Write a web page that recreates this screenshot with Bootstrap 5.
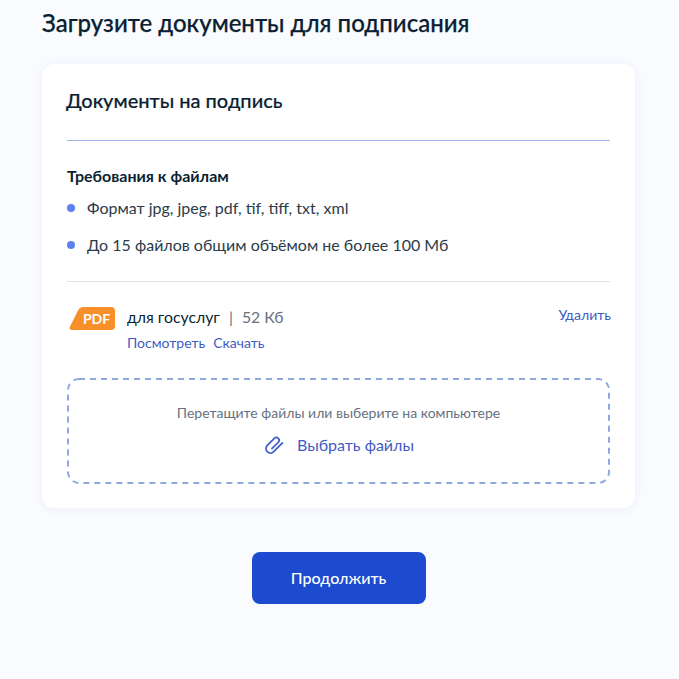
<!DOCTYPE html>
<html lang="ru">
<head>
  <meta charset="UTF-8">
  <meta name="viewport" content="width=device-width, initial-scale=1">
  <title>Загрузите документы</title>
  <link href="https://cdn.jsdelivr.net/npm/bootstrap@5.3.2/dist/css/bootstrap.min.css" rel="stylesheet">
  <style>
    body {
      background: #fafbff;
      font-family: Lato, "Noto Sans", sans-serif;
      color: #0b1f33;
      overflow: hidden;
    }
    .page-wrap {
      padding: 8px 44px 0 42px;
    }
    .page-title {
      font-size: 24px;
      line-height: 30px;
      font-weight: 500;
      margin: 0 0 26px;
      -webkit-text-stroke: 0.25px #0b1f33;
    }
    .doc-card {
      background: #fff;
      border-radius: 12px;
      box-shadow: 0 1px 10px rgba(105, 130, 190, .1);
      padding: 22px 25px 24px;
      height: 444px;
    }
    .doc-title {
      font-size: 20px;
      line-height: 28px;
      font-weight: 500;
      margin: 0;
      padding-bottom: 26px;
      border-bottom: 1px solid #9db4e8;
      text-indent: -1px;
      -webkit-text-stroke: 0.2px #0b1f33;
    }
    .req-title {
      font-size: 16px;
      line-height: 20px;
      font-weight: 700;
      margin: 25px 0 0;
    }
    .req-list {
      list-style: none;
      margin: 0;
      padding: 0 0 24px;
      border-bottom: 1px solid #e1e1e1;
      font-size: 16px;
      line-height: 24px;
      color: #2c3b4a;
    }
    .req-list li {
      display: flex;
      align-items: center;
      gap: 12px;
      margin-top: 13px;
    }
    .req-list li:first-child { margin-top: 10px; }
    .req-dot {
      width: 8px;
      height: 8px;
      border-radius: 50%;
      background: #5a82ee;
      flex-shrink: 0;
    }
    .file-row { margin: 25px -1px 0 0; }
    .pdf-icon {
      width: 47px;
      height: 23px;
      flex-shrink: 0;
      margin: 0 11px 0 2px;
    }
    .file-name { font-size: 15.8px; line-height: 20px; }
    .file-size { color: #66727f; }
    .file-sep { color: #66727f; margin: 0 5px; }
    .doc-link {
      color: #3f5bc4;
      font-size: 14px;
      line-height: 20px;
      text-decoration: none;
    }
    .file-links { margin-top: 6px; }
    .delete-link { margin-top: -2px; }
    .drop-zone {
      margin-top: 25px;
      height: 106px;
      padding-bottom: 3px;
      position: relative;
    }
    .drop-frame {
      position: absolute;
      inset: 0;
      width: 100%;
      height: 100%;
    }
    .drop-hint { font-size: 14px; line-height: 20px; color: #66727f; }
    .pick-files { font-size: 16px; line-height: 24px; color: #3f5bc4; margin-top: 10px; gap: 12px; }
    .btn-next {
      background: #1d4bd0;
      border: 0;
      color: #fff;
      font-size: 16px;
      width: 174px;
      height: 52px;
      border-radius: 8px;
      font-weight: 500;
    }
    .next-row { margin-top: 44px; }
  </style>
</head>
<body>

<div class="page-wrap">
  <h1 class="page-title">Загрузите документы для подписания</h1>

  <div class="doc-card">
    <h2 class="doc-title">Документы на подпись</h2>

    <p class="req-title">Требования к файлам</p>
    <ul class="req-list">
      <li><span class="req-dot"></span>Формат jpg, jpeg, pdf, tif, tiff, txt, xml</li>
      <li><span class="req-dot"></span>До 15 файлов общим объёмом не более 100 Мб</li>
    </ul>

    <!-- файл -->
    <div class="file-row d-flex align-items-start">
      <svg class="pdf-icon" viewBox="0 0 47 23" aria-hidden="true">
        <path d="M14 0H42a4 4 0 0 1 4 4V19a4 4 0 0 1-4 4H3C0.800 23 0 21.500 1 19.500L9 3.500C10 1.200 11.800 0 14 0Z" fill="#f7902a"/>
        <text x="27.500" y="17" text-anchor="middle" fill="#fff" font-family="Lato, sans-serif" font-size="14" font-weight="700">PDF</text>
      </svg>
      <div class="flex-grow-1">
        <div class="file-name">для госуслуг<span class="file-sep"> | </span><span class="file-size">52 Кб</span></div>
        <div class="file-links d-flex gap-2">
          <a class="doc-link" href="#">Посмотреть</a>
          <a class="doc-link" href="#">Скачать</a>
        </div>
      </div>
      <a class="doc-link delete-link" href="#">Удалить</a>
    </div>

    <div class="drop-zone d-flex flex-column align-items-center justify-content-center">
      <svg class="drop-frame" aria-hidden="true">
        <rect x="1" y="1" width="541" height="104" rx="11" fill="none" stroke="#90a8e0" stroke-width="2" stroke-dasharray="6 5"/>
      </svg>
      <div class="drop-hint">Перетащите файлы или выберите на компьютере</div>
      <div class="pick-files d-flex align-items-center">
        <svg width="22" height="22" viewBox="0 0 22 22" fill="none" stroke="#3f5bc4" stroke-width="1.700" stroke-linecap="round" aria-hidden="true">
          <g transform="rotate(45 11 11)">
            <path d="M15.500 3.500V16a4.500 4.500 0 0 1-9 0V6a2.800 2.800 0 0 1 5.600 0V15"/>
          </g>
        </svg>
        <span>Выбрать файлы</span>
      </div>
    </div>
  </div>

  <div class="next-row text-center">
    <button class="btn btn-next" type="button">Продолжить</button>
  </div>
</div>

<script src="https://cdn.jsdelivr.net/npm/bootstrap@5.3.2/dist/js/bootstrap.bundle.min.js"></script>
</body>
</html>
